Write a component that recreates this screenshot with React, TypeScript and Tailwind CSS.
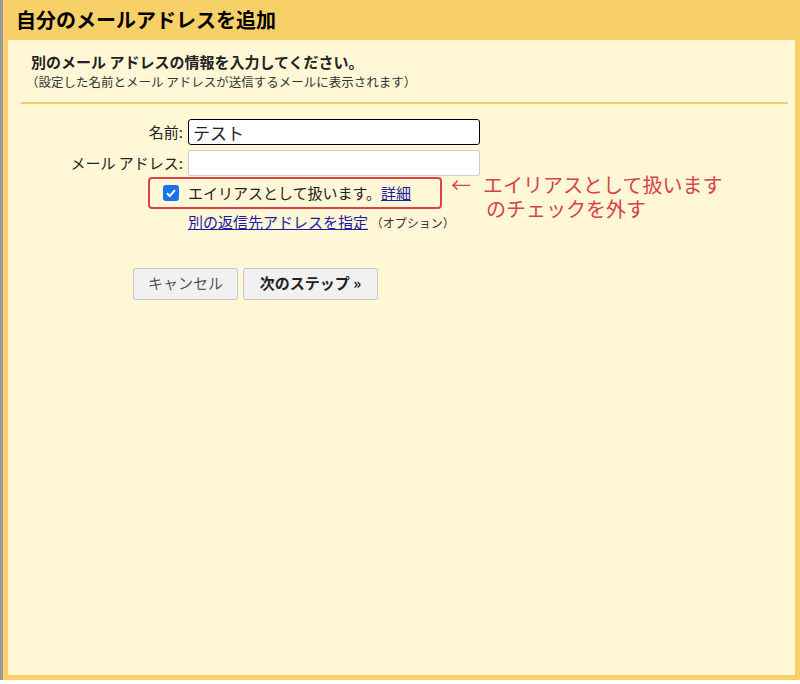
import React from 'react';

const font = { fontFamily: '"Noto Sans CJK JP", "Liberation Sans", sans-serif' };

export default function App() {
  return (
    <div className="relative h-[684px] w-[800px] overflow-hidden bg-white text-[#222]" style={font}>
      <div className="flex h-[680px] w-[800px] flex-col border-l-[3px] border-[#9a9a9a]">
        <div className="flex h-full flex-col border-[5px] border-t-0 border-[#f7d068] bg-[#fff7d6]">
          <div className="flex h-[40px] items-center bg-[#f7d068] pl-[8px] text-[20px] font-bold leading-none text-black">
            自分のメールアドレスを追加
          </div>
          <div className="px-[13px] pt-[12px]">
            <div className="pl-[10px] text-[15px] font-bold leading-[20px]">別のメール アドレスの情報を入力してください。</div>
            <div className="pl-[5px] text-[12.5px] leading-[20px] text-[#333]">（設定した名前とメール アドレスが送信するメールに表示されます）</div>
            <div className="mt-[10px] h-[2px] w-[767px] bg-[#f2cf6a]" />
            <div className="mt-[15px] grid grid-cols-[162px_1fr] items-center gap-x-[5px] gap-y-[5px] text-[15px]">
              <div className="text-right">名前:</div>
              <input
                defaultValue="テスト"
                className="h-[26px] w-[292px] rounded-[3px] border-[1.5px] border-black bg-white px-[4px] text-[17px] outline-none"
              />
              <div className="text-right">メール アドレス:</div>
              <input className="h-[26px] w-[292px] rounded-[2px] border border-[#ccc] bg-white outline-none" />
            </div>
            <div className="relative mt-[1px] ml-[127px] flex h-[32px] w-[294px] items-center gap-[9px] rounded-[4px] border-[2.5px] border-[#d8434a] pl-[13px] text-[15px]">
              <span className="flex h-[16px] w-[16px] items-center justify-center rounded-[3px] bg-[#1a73e8]">
                <svg width="12" height="12" viewBox="0 0 12 12"><path d="M2 6.2 L4.8 9 L10 3.2" stroke="white" strokeWidth="2" fill="none" /></svg>
              </span>
              <span>エイリアスとして扱います。<span className="text-[#1a1aa6] underline">詳細</span></span>
              <div className="absolute left-[301px] top-[-6px] whitespace-nowrap text-[20px] leading-[24px] text-[#d8434a]">
                <div className="flex gap-[12px]"><span>←</span><span>エイリアスとして扱います</span></div>
                <div className="pl-[35px]">のチェックを外す</div>
              </div>
            </div>
            <div className="mt-[2px] ml-[167px] text-[15px]">
              <span className="text-[#1a1aa6] underline">別の返信先アドレスを指定</span>
              <span className="text-[12px] text-[#333]"> （オプション）</span>
            </div>
            <div className="mt-[34px] ml-[112px] flex gap-[5px] text-[15px]">
              <button className="h-[32px] w-[105px] rounded-[2px] border border-[#c8c8c8] bg-[#f1f1f1] text-[#555]">キャンセル</button>
              <button className="h-[32px] w-[135px] rounded-[2px] border border-[#c8c8c8] bg-[#f1f1f1] font-bold">次のステップ »</button>
            </div>
          </div>
        </div>
      </div>
    </div>
  );
}
